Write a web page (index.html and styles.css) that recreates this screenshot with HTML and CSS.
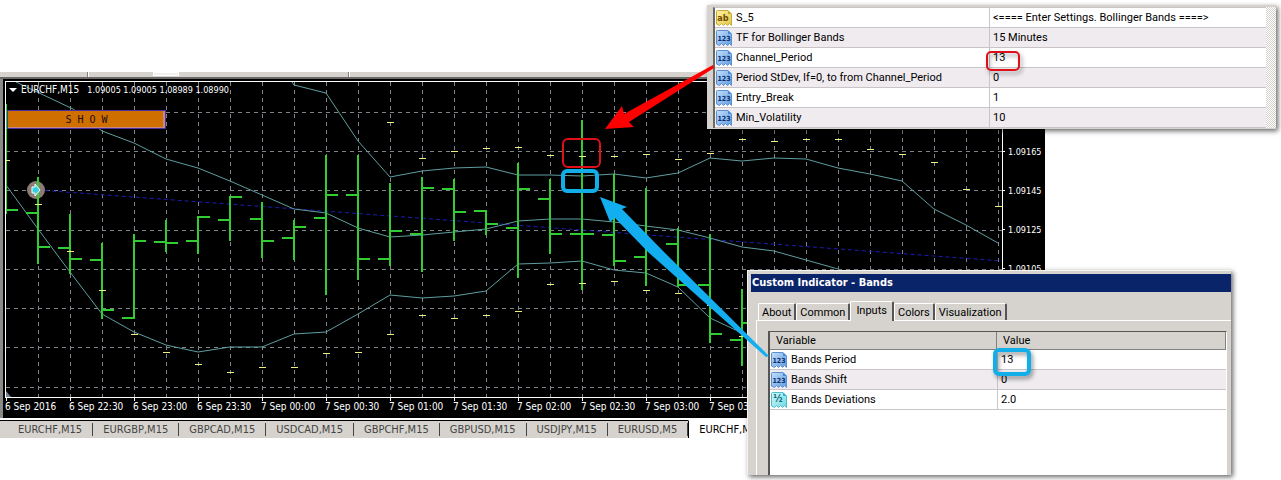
FILE: index.html
```html
<!DOCTYPE html>
<html lang="en">
<head>
    <meta charset="UTF-8">
    <meta name="viewport" content="width=device-width, initial-scale=1.0">
    <title>EURCHF,M15</title>
    <link rel="stylesheet" href="styles.css">
</head>
<body>
    <!-- Shared icon shapes -->
    <svg class="sprite" aria-hidden="true">
        <defs>
            <linearGradient id="blueFill" x1="0" y1="0" x2="1" y2="1">
                <stop offset="0" stop-color="#c3e0fa"/>
                <stop offset="1" stop-color="#5f9be0"/>
            </linearGradient>
            <linearGradient id="yellowFill" x1="0" y1="0" x2="1" y2="1">
                <stop offset="0" stop-color="#fdf3a0"/>
                <stop offset="1" stop-color="#e3c64a"/>
            </linearGradient>
            <linearGradient id="cyanFill" x1="0" y1="0" x2="1" y2="1">
                <stop offset="0" stop-color="#d2fafa"/>
                <stop offset="1" stop-color="#6cd8e4"/>
            </linearGradient>
        </defs>
        <symbol id="page-blue" viewBox="0 0 16 16">
            <path d="M.5 1.500Q.5.500 1.500.500H12L15.500 4V15.500L13.500 13.500L11.500 15.500L9.500 13.500L7.500 15.500L5.500 13.500L3.500 15.500L.5 14Z" fill="url(#blueFill)" stroke="#5b8fd0"/>
            <path d="M12 .5V4H15.500Z" fill="#4a86d8"/>
        </symbol>
        <symbol id="page-yellow" viewBox="0 0 16 16">
            <path d="M.5 1.500Q.5.500 1.500.500H12L15.500 4V15.500L13.500 13.500L11.500 15.500L9.500 13.500L7.500 15.500L5.500 13.500L3.500 15.500L.5 14Z" fill="url(#yellowFill)" stroke="#c9a93a"/>
            <path d="M12 .5V4H15.500Z" fill="#c9a52c"/>
        </symbol>
        <symbol id="page-cyan" viewBox="0 0 16 16">
            <path d="M.5 1.500Q.5.500 1.500.500H12L15.500 4V15.500L13.500 13.500L11.500 15.500L9.500 13.500L7.500 15.500L5.500 13.500L3.500 15.500L.5 14Z" fill="url(#cyanFill)" stroke="#4fbccb"/>
            <path d="M12 .5V4H15.500Z" fill="#2fb0c4"/>
        </symbol>
    </svg>

    <main class="desktop">
        <section class="chart-window">
            <div class="toolbar-edge">
                <span class="toolbar-grip"></span>
                <span class="toolbar-pressed"></span>
                <span class="toolbar-grip"></span>
            </div>
            <div class="chart">
                <div class="plot">
                    <svg id="plot" width="996" height="315" viewBox="6 82 996 315">
                        <g id="grid" class="grid"></g>
                        <path class="trend" d="M38 190L1002 261"/>
                        <g id="bands" class="band"></g>
                        <circle cx="36" cy="190" r="9" fill="#8c7c74"/>
                        <g id="bars" class="bar"></g>
                        <g id="marks" class="mark"></g>
                        <path d="M32 187H35V184L40 190L35 196V193H32Z" fill="#30d0e0" stroke="#fff"/>
                        <path d="M6 391L11 397H6Z" fill="#778899"/>
                    </svg>
                    <div class="plot-title"><span class="arrow-down"></span><span class="symbol">EURCHF,M15</span> <span class="prices">1.09005 1.09005 1.08989 1.08990</span></div>
                    <button class="show-button" type="button">S H O W</button>
                </div>
                <ul class="price-axis">
                    <li>1.09165</li>
                    <li>1.09145</li>
                    <li>1.09125</li>
                    <li>1.09105</li>
                </ul>
                <ul class="time-axis">
                    <li>6 Sep 2016</li>
                    <li>6 Sep 22:30</li>
                    <li>6 Sep 23:00</li>
                    <li>6 Sep 23:30</li>
                    <li>7 Sep 00:00</li>
                    <li>7 Sep 00:30</li>
                    <li>7 Sep 01:00</li>
                    <li>7 Sep 01:30</li>
                    <li>7 Sep 02:00</li>
                    <li>7 Sep 02:30</li>
                    <li>7 Sep 03:00</li>
                    <li>7 Sep 03:30</li>
                </ul>
            </div>
            <nav class="chart-tabs">
                <button type="button">EURCHF,M15</button>
                <button type="button">EURGBP,M15</button>
                <button type="button">GBPCAD,M15</button>
                <button type="button">USDCAD,M15</button>
                <button type="button">GBPCHF,M15</button>
                <button type="button">GBPUSD,M15</button>
                <button type="button">USDJPY,M15</button>
                <button type="button">EURUSD,M5</button>
                <button type="button" class="active">EURCHF,M15</button>
            </nav>
        </section>

        <section class="settings-panel">
            <table class="inputs">
                <tbody>
                    <tr><td><svg class="icon icon-string"><use href="#page-yellow"/><text x="7" y="11">ab</text></svg>S_5</td><td>&lt;==== Enter Settings. Bollinger Bands ====&gt;</td></tr>
                    <tr><td><svg class="icon"><use href="#page-blue"/><text x="8" y="11">123</text></svg>TF for Bollinger Bands</td><td>15 Minutes</td></tr>
                    <tr><td><svg class="icon"><use href="#page-blue"/><text x="8" y="11">123</text></svg>Channel_Period</td><td>13</td></tr>
                    <tr><td><svg class="icon"><use href="#page-blue"/><text x="8" y="11">123</text></svg>Period StDev, If=0, to from Channel_Period</td><td>0</td></tr>
                    <tr><td><svg class="icon"><use href="#page-blue"/><text x="8" y="11">123</text></svg>Entry_Break</td><td>1</td></tr>
                    <tr><td><svg class="icon"><use href="#page-blue"/><text x="8" y="11">123</text></svg>Min_Volatility</td><td>10</td></tr>
                </tbody>
            </table>
            <div class="scroll-track"></div>
        </section>

        <section class="dialog">
            <h1 class="dialog-title">Custom Indicator - Bands</h1>
            <div class="dialog-tabs">
                <button type="button">About</button>
                <button type="button">Common</button>
                <button type="button" class="active">Inputs</button>
                <button type="button">Colors</button>
                <button type="button">Visualization</button>
            </div>
            <div class="dialog-page">
                <div class="list">
                    <table class="inputs">
                        <thead>
                            <tr><th>Variable</th><th>Value</th></tr>
                        </thead>
                        <tbody>
                            <tr><td><svg class="icon"><use href="#page-blue"/><text x="8" y="11">123</text></svg>Bands Period</td><td>13</td></tr>
                            <tr><td><svg class="icon"><use href="#page-blue"/><text x="8" y="11">123</text></svg>Bands Shift</td><td>0</td></tr>
                            <tr><td><svg class="icon icon-double"><use href="#page-cyan"/><text x="7" y="10">½</text></svg>Bands Deviations</td><td>2.0</td></tr>
                        </tbody>
                    </table>
                </div>
            </div>
        </section>

        <!-- Arrows and frames drawn over the windows -->
        <svg class="notes" aria-hidden="true">
            <rect class="frame-red" x="563" y="139" width="37" height="28" rx="5"/>
            <rect class="frame-blue" x="563" y="171" width="34" height="20" rx="4"/>
            <rect class="frame-red shadow" x="987" y="52" width="32" height="18" rx="4"/>
            <rect class="frame-blue shadow" x="995" y="350" width="34" height="24" rx="4"/>
            <path fill="#fe0000" d="M605 129L622 106L624 114L713 65L714 68L629 122L634 127Z"/>
            <path fill="#12aef0" d="M600 197L627 207L622 209L664 252L769 356L766 357L648 252L615 218L610 222Z"/>
        </svg>
    </main>

    <script>
        // x, high, low, open, close
        const bars = [
            [6, 104, 214, null, 210],
            [38, 177, 264, 213, 247],
            [70, 214, 274, 248, 259],
            [102, 243, 319, 260, 310],
            [134, 234, 319, 318, 241],
            [166, 220, 252, 242, 243],
            [198, 216, 254, 241, 217],
            [230, 196, 241, 220, 197],
            [262, 202, 258, 219, 241],
            [294, 220, 260, 238, 227],
            [326, 155, 295, 218, 195],
            [358, 155, 280, 195, 259],
            [390, 183, 266, 259, 231],
            [422, 177, 272, 234, 188],
            [454, 179, 241, 189, 212],
            [486, 210, 235, 211, 224],
            [518, 163, 278, 228, 189],
            [550, 179, 254, 199, 234],
            [582, 120, 290, 234, 234],
            [614, 174, 266, 235, 261],
            [646, 188, 286, 257, null],
            [678, 228, 287, 244, 285],
            [710, 234, 343, 285, 334],
            [742, 289, 366, 340, 323]
        ];

        const bands = [
            'M16 82L73 109L102 131L134 143L166 159L198 168L230 181L262 195L294 209L326 213L358 228L390 237L422 235L454 232L486 229L518 221L550 219L582 219L614 222L646 226L678 230L710 238L742 247L774 251L806 260L838 269',
            'M292 82L294 85L326 93L358 141L390 177L422 171L454 168L486 167L518 175L550 175L582 176L614 174L646 178L678 173L710 158L742 161L774 158L806 159L838 168L870 174L902 181L934 209L966 225L998 243',
            'M6 185L38 229L70 272L102 314L134 332L166 345L198 352L230 347L262 347L294 334L326 332L358 314L390 295L422 298L454 296L486 291L518 264L550 263L582 261L614 270L646 273L678 287L710 318L742 333'
        ];

        // y values, one per bar
        const lowMarks = [160, 204, 251, 290, 334, 352, 364, 372, 367, 367, 353, 352, 334, 315, 318, 315, 311, 284, 283, 281, 290, 293, 305, 336];
        const highMarks = [122, 158, 151, 148, 147, 155, 156, 156, 154, 159, 153, 139, 141, 139, 139, 149, 154, 162, 189, 206];

        function addPath(groupId, d) {
            let path = document.createElementNS('http://www.w3.org/2000/svg', 'path');
            path.setAttribute('d', d);
            document.getElementById(groupId).appendChild(path);
        }

        // Grid
        for (let x = 38; x <= 998; x += 32) {
            addPath('grid', `M${x + 0.5} 82V397`);
        }
        [112, 151, 190, 230, 269, 308, 347, 387].forEach(y => addPath('grid', `M6 ${y + 0.5}H1002`));

        bands.forEach(d => addPath('bands', d));

        bars.forEach(([x, high, low, open, close]) => {
            addPath('bars', `M${x} ${high}V${low}`);
            if (open !== null) {
                addPath('bars', `M${x - 12} ${open}H${x}`);
            }
            if (close !== null) {
                addPath('bars', `M${x} ${close}H${x + 12}`);
            }
        });

        function addMarks(values, startX) {
            values.forEach((y, i) => {
                let x = startX + i * 32;
                addPath('marks', `M${x - 3} ${y + 0.5}H${x + 4}`);
            });
        }
        addMarks(lowMarks, 6);
        addMarks(highMarks, 390);
    </script>
</body>
</html>
```

FILE: styles.css
```css
* {
    box-sizing: border-box;
}
body {
    margin: 0;
    background-color: #fff;
    font-family: Roboto, "Liberation Sans", Arial, sans-serif;
    font-size: 11px;
    color: #000;
}
ul {
    list-style: none;
    margin: 0;
    padding: 0;
}
button {
    font: inherit;
    cursor: pointer;
}
.sprite {
    position: absolute;
    width: 0;
    height: 0;
}
.desktop {
    position: relative;
    min-height: 100vh;
    overflow: hidden;
}

/* Chart window */
.chart-window {
    position: absolute;
    top: 72px;
    left: 0;
    right: 236px;
    font-family: "DejaVu Sans Condensed", "DejaVu Sans", Tahoma, sans-serif;
}
.toolbar-edge {
    display: flex;
    gap: 64px;
    height: 7px;
    padding-left: 87px;
    background-color: #d6d3ce;
    border-bottom: 2px solid #6b6965;
}
.toolbar-grip {
    width: 2px;
    border-left: 1px solid #808080;
    border-right: 1px solid #fff;
}
.toolbar-pressed {
    width: 26px;
    height: 4px;
    background-color: #f0efed;
    border: 1px solid #fff;
}
.toolbar-grip:last-child {
    margin-left: 105px;
}
.chart {
    display: grid;
    grid-template-columns: 1fr 42px;
    padding: 2px 0 0 2px;
    background-color: #000;
    border-left: 3px solid #8c8a86;
    color: #fff;
    font-size: 10px;
}
.plot {
    position: relative;
    height: 317px;
    border: 1px solid #fff;
    overflow: hidden;
}
.plot svg {
    display: block;
}
.grid path {
    stroke: #80868e;
    stroke-dasharray: 4 4;
    shape-rendering: crispEdges;
}
.band path {
    fill: none;
    stroke: #5f9ea0;
}
.bar path {
    fill: none;
    stroke: #32cd32;
    stroke-width: 2;
    shape-rendering: crispEdges;
}
.mark path {
    stroke: #f0f080;
    shape-rendering: crispEdges;
}
.trend {
    stroke: #1c1cb4;
    stroke-dasharray: 4 3;
}
.plot-title {
    position: absolute;
    top: 2px;
    left: 3px;
    display: flex;
    align-items: center;
    line-height: 12px;
    white-space: nowrap;
}
.symbol {
    margin: 0 8px 0 4px;
}
.prices {
    font-size: 9px;
}
.arrow-down {
    border: 4px solid transparent;
    border-top-color: #fff;
    border-bottom: 0;
}
.show-button {
    position: absolute;
    top: 28px;
    left: 1px;
    width: 159px;
    height: 19px;
    padding: 0;
    background-color: #ce6f00;
    border: 1px solid #4b2fa0;
    box-shadow: inset -2px -1px 0 #c88a80;
    color: #200c10;
    font-family: "DejaVu Sans Mono", monospace;
    font-size: 10px;
}
.price-axis {
    padding-top: 51px;
    font-size: 9px;
}
.price-axis li {
    display: flex;
    align-items: center;
    gap: 3px;
    height: 39px;
}
.price-axis li::before {
    content: "";
    width: 2px;
    height: 1px;
    background-color: #fff;
}
.time-axis {
    grid-column: 1 / -1;
    display: flex;
    height: 20px;
    overflow: hidden;
}
.time-axis li {
    flex: 0 0 64px;
    line-height: 12px;
    white-space: nowrap;
}
.time-axis li::before {
    content: "";
    display: block;
    width: 1px;
    height: 3px;
    margin-left: 1px;
    background-color: #fff;
}

/* Tabs under the chart */
.chart-tabs {
    display: flex;
    width: max-content;
    margin-top: 2px;
    font-size: 11px;
}
.chart-tabs button {
    position: relative;
    height: 18px;
    padding: 0 11px 0 10px;
    background-color: #d6d3ce;
    border: 0;
    border-top: 1px solid #000;
    color: #444;
}
.chart-tabs button:first-child {
    padding-left: 18px;
}
.chart-tabs button:not(.active)::after {
    content: "";
    position: absolute;
    right: 0;
    top: 2px;
    bottom: 2px;
    border-right: 1px solid #444;
}
.chart-tabs .active {
    background-color: #fff;
    border-top-color: #fff;
    border-left: 1px solid #000;
    color: #000;
}

/* Input tables */
.inputs {
    width: 100%;
    border-collapse: separate;
    border-spacing: 0;
    table-layout: fixed;
}
.inputs td {
    height: 20px;
    padding: 0 4px 0 1px;
    background-color: #fff;
    border-bottom: 1px solid #c8c4c8;
    white-space: nowrap;
}
.inputs td + td {
    border-left: 1px solid #c8c4c8;
    padding-left: 3px;
}
.inputs tr:nth-child(even) td {
    background-color: #efebef;
}
.icon {
    width: 16px;
    height: 16px;
    margin-right: 4px;
    vertical-align: middle;
}
.icon text {
    fill: #0a2c6c;
    font: bold 7px "DejaVu Sans Condensed", "DejaVu Sans", sans-serif;
    text-anchor: middle;
}
.icon-string text {
    fill: #6b4a00;
    font-size: 9px;
}
.icon-double text {
    fill: #0c6878;
    font-size: 10px;
}

/* Settings panel */
.settings-panel {
    position: absolute;
    top: 5px;
    left: 707px;
    right: 5px;
    display: flex;
    padding: 2px 0 1px 6px;
    background-color: #d6d3ce;
    box-shadow: 2px 2px 5px rgba(0, 0, 0, 0.6);
}
.settings-panel .inputs {
    flex: 1;
    border-left: 2px solid #6b6965;
    border-top: 1px solid #c8c4c8;
}
.settings-panel td:first-child {
    width: 274px;
}
.scroll-track {
    width: 10px;
    background: repeating-conic-gradient(#d6d3ce 0 25%, #fff 0 50%) 0 0 / 2px 2px;
}

/* Indicator dialog */
.dialog {
    position: absolute;
    top: 270px;
    left: 747px;
    right: 50px;
    height: 205px;
    display: flex;
    flex-direction: column;
    padding: 3px 0 0 3px;
    background-color: #d6d3ce;
    border-top: 1px solid #f4f3f1;
    border-left: 1px solid #f4f3f1;
    box-shadow: 2px 2px 5px rgba(0, 0, 0, 0.6);
}
.dialog-title {
    margin: 0 0 9px;
    padding-left: 1px;
    background-color: #0a246a;
    color: #fff;
    font: bold 11px/18px "DejaVu Sans Condensed", "DejaVu Sans", Tahoma, sans-serif;
}
.dialog-tabs {
    display: flex;
    align-items: flex-end;
    padding-left: 7px;
}
.dialog-tabs button {
    height: 17px;
    padding: 0 3px;
    background-color: #d6d3ce;
    border: 1px solid #fff;
    border-right: 2px solid #555;
    border-bottom: 0;
    border-radius: 2px 2px 0 0;
}
.dialog-tabs .active {
    height: 20px;
    margin-bottom: -1px;
    padding: 0 5px 3px;
    z-index: 1;
}
.dialog-page {
    flex: 1;
    display: flex;
    margin-left: 5px;
    padding: 10px 4px 0 11px;
    border-top: 1px solid #fff;
    border-left: 1px solid #fff;
}
.list {
    flex: 1;
    background-color: #fff;
    border-top: 1px solid #555;
    border-left: 2px solid #555;
    border-right: 1px solid #fff;
}
.inputs th {
    height: 18px;
    padding: 0 6px;
    background-color: #d6d3ce;
    border-bottom: 1px solid #808080;
    border-right: 1px solid #808080;
    font-weight: normal;
    text-align: left;
}
.inputs th:first-child {
    width: 227px;
}

/* Arrows and frames */
.notes {
    position: absolute;
    top: 0;
    left: 0;
    width: 100%;
    height: 100%;
    pointer-events: none;
}
.frame-red {
    fill: none;
    stroke: #e01018;
    stroke-width: 2;
}
.frame-blue {
    fill: none;
    stroke: #12aeea;
    stroke-width: 4;
}
.shadow {
    filter: drop-shadow(2px 3px 2px rgba(0, 0, 0, 0.4));
}
```
